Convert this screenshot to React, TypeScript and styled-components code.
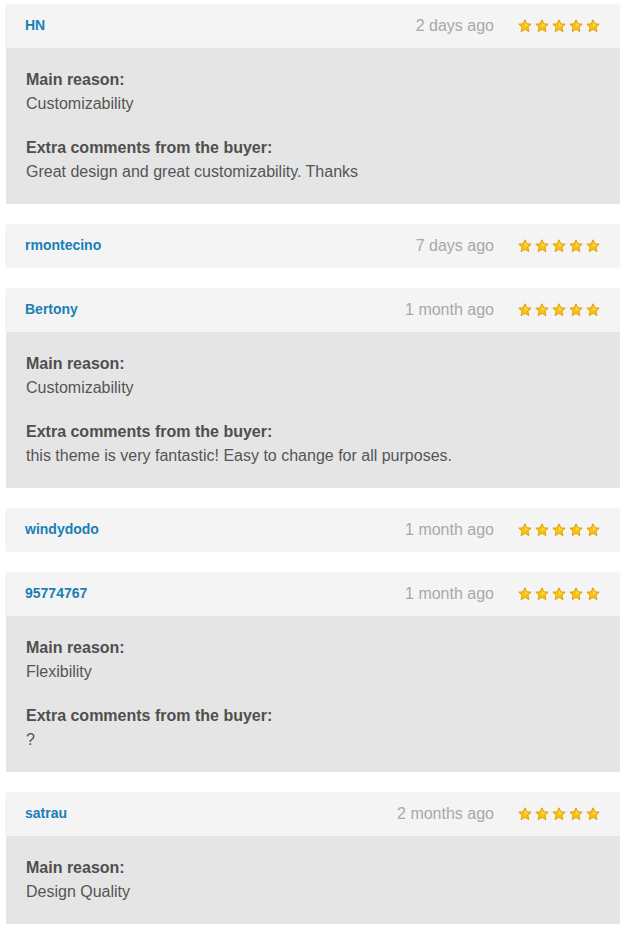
import React from "react";
import styled, { createGlobalStyle } from "styled-components";

const Global = createGlobalStyle`
  html, body { margin: 0; padding: 0; background: #ffffff; }
  body { font-family: "Liberation Sans", Arial, sans-serif; }
`;

const List = styled.div`
  display: flex;
  flex-direction: column;
  gap: 20px;
  padding: 4px 4px 0 5px;
`;

const Card = styled.div`
  display: flex;
  flex-direction: column;
`;

const Header = styled.div<{ $open: boolean }>`
  display: flex;
  align-items: center;
  height: 44px;
  padding: 0 20px 0 20px;
  background: #f4f4f4;
  border-radius: ${(p) => (p.$open ? "4px 4px 0 0" : "4px")};
  box-sizing: border-box;
`;

const Name = styled.a`
  font-size: 14px;
  font-weight: bold;
  color: #1a7fb5;
  text-decoration: none;
  flex: 1;
  margin-top: -2px;
`;

const DateText = styled.span`
  font-size: 16px;
  color: #a8a8a8;
  margin-right: 24px;
`;

const Stars = styled.div`
  display: flex;
  gap: 3px;
`;

const Body = styled.div`
  background: #e5e5e5;
  padding: 20px 20px;
  margin-left: 1px;
  display: flex;
  flex-direction: column;
  gap: 20px;
  color: #555555;
  font-size: 16px;
  line-height: 24px;
`;

const Section = styled.div`
  display: flex;
  flex-direction: column;
`;

const Label = styled.div`
  font-weight: bold;
  color: #4f4f4f;
`;

const Star = () => (
  <svg width="14" height="14" viewBox="0 0 14 14">
    <path
      d="M7 0.8 L8.8 4.8 L13.2 5.2 L9.9 8.1 L10.9 12.6 L7 10.3 L3.1 12.6 L4.1 8.1 L0.8 5.2 L5.2 4.8 Z"
      fill="#fdc20e"
      stroke="#d99a00"
      strokeWidth="0.9"
      strokeLinejoin="round"
    />
    <path d="M7 2.8 L8.2 5.6 L11 5.9 L7 7.5 Z" fill="#ffe27a" opacity="0.8" />
  </svg>
);

type Review = {
  name: string;
  date: string;
  reason?: string;
  comment?: string;
};

const reviews: Review[] = [
  { name: "HN", date: "2 days ago", reason: "Customizability", comment: "Great design and great customizability. Thanks" },
  { name: "rmontecino", date: "7 days ago" },
  { name: "Bertony", date: "1 month ago", reason: "Customizability", comment: "this theme is very fantastic! Easy to change for all purposes." },
  { name: "windydodo", date: "1 month ago" },
  { name: "95774767", date: "1 month ago", reason: "Flexibility", comment: "?" },
  { name: "satrau", date: "2 months ago", reason: "Design Quality" },
];

export default function App() {
  return (
    <>
      <Global />
      <List>
        {reviews.map((r) => {
          const open = !!(r.reason || r.comment);
          return (
            <Card key={r.name}>
              <Header $open={open}>
                <Name href="#">{r.name}</Name>
                <DateText>{r.date}</DateText>
                <Stars>
                  {[0, 1, 2, 3, 4].map((i) => (
                    <Star key={i} />
                  ))}
                </Stars>
              </Header>
              {open && (
                <Body>
                  {r.reason && (
                    <Section>
                      <Label>Main reason:</Label>
                      <div>{r.reason}</div>
                    </Section>
                  )}
                  {r.comment && (
                    <Section>
                      <Label>Extra comments from the buyer:</Label>
                      <div>{r.comment}</div>
                    </Section>
                  )}
                </Body>
              )}
            </Card>
          );
        })}
      </List>
    </>
  );
}
